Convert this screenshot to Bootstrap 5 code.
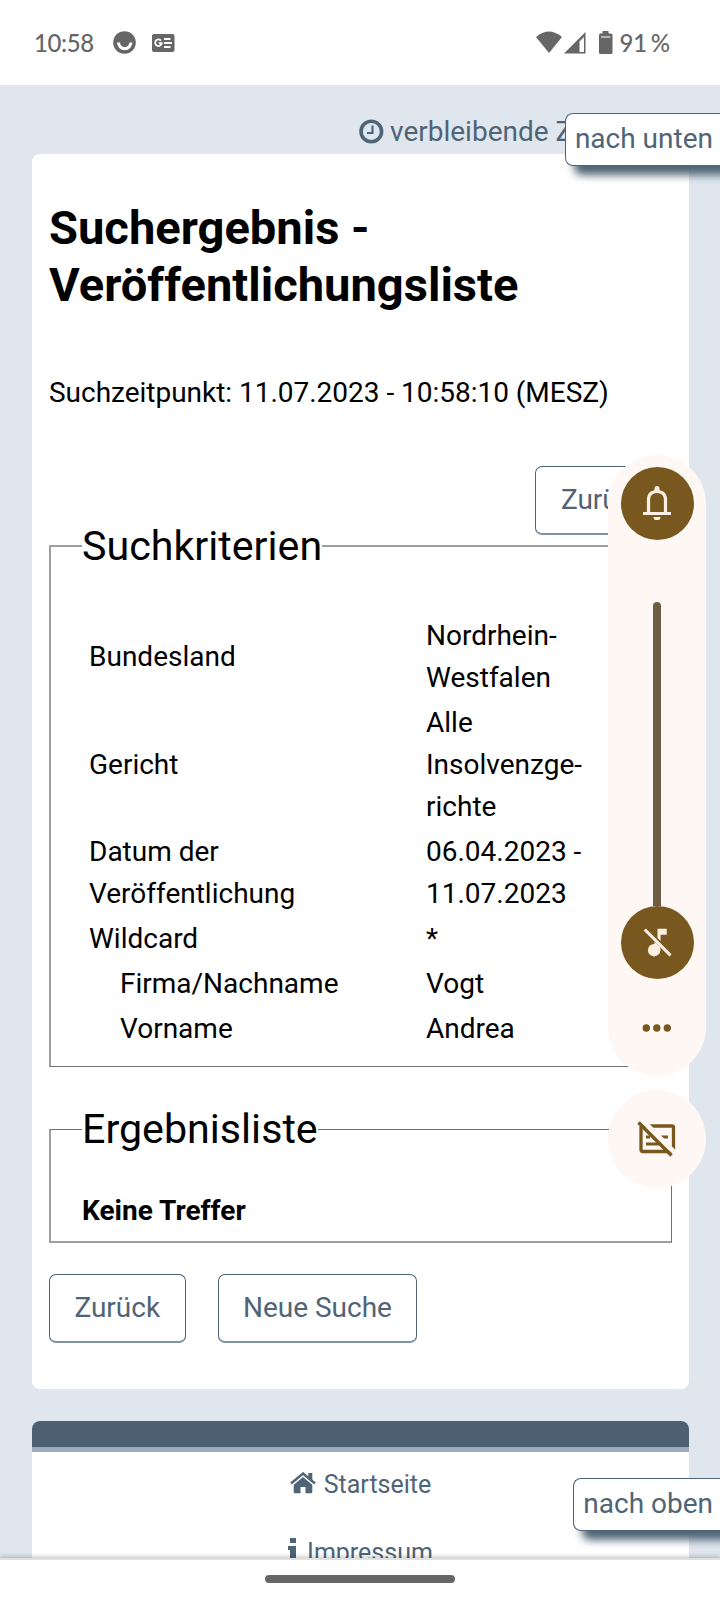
<!DOCTYPE html>
<html lang="de">
<head>
<meta charset="utf-8">
<meta name="viewport" content="width=device-width, initial-scale=1">
<title>Suchergebnis - Veröffentlichungsliste</title>
<link rel="stylesheet" href="https://cdn.jsdelivr.net/npm/bootstrap@5.3.0/dist/css/bootstrap.min.css">
<script src="https://cdn.jsdelivr.net/npm/bootstrap@5.3.0/dist/js/bootstrap.bundle.min.js"></script>
<style>
body { font: 28px/42px Roboto, sans-serif; color: #000; }
svg { display: block; flex: none; }
.screen { width: 720px; height: 1600px; background: #dfe6ee; }
.statusbar { height: 85px; padding: 0 50px 0 34px; color: #666; font: 500 24px/30px Lato, sans-serif; }
.icon-face { margin-left: 19px; }
.icon-news { margin: 0 auto 0 16px; }
.slate { color: #4f6476; }
.timer { height: 69px; padding: 26px 32px 0 359px; white-space: nowrap; }
.sheet { width: 657px; margin-left: 32px; border-radius: 8px; height: 1235px; padding: 46px 17px 0; }
.sheet h1 { font-size: 47.1px; line-height: 56.5px; font-weight: 700; margin-bottom: 59px; }
.stamp { margin-bottom: 52px; letter-spacing: -.02px; }
.btn-slate { --bs-btn-color: #4f6476; --bs-btn-border-color: #4f6476; --bs-btn-font-size: 28px; --bs-btn-line-height: 42px;
  --bs-btn-padding-x: 24.4px; --bs-btn-padding-y: 12px; --bs-btn-border-radius: 7px; --bs-btn-bg: #fff; border-bottom: 2px solid #8093a4; }
.group { border: 2px solid #9e9e9e; border-right: 1px solid #707070; padding: 0 31px; }
.group legend { font-size: 41.2px; line-height: 24px; margin-bottom: 0; }
.criteria { height: 533px; border-bottom: 1px solid #707070; margin-top: -1px; }
.criteria-rows { padding: 57px 7px 0; gap: 3px; }
.criteria-label { width: 337px; }
.sub { padding-left: 31px; }
.results { height: 126px; border-top: 1px solid #707070; margin-top: 50px; }
.foot { width: 657px; margin: 32px 0 0 32px; height: 150px; background: #fff; border-radius: 8px 8px 0 0; overflow: hidden;
  font-size: 25px; line-height: 36px; }
.foot-bar { height: 31px; background: #4d6072; border-bottom: 5px solid #9aacbd; }
.jump { right: 0; border: 1px solid #4f6476; border-right: 0; border-radius: 8px 0 0 8px; padding: 4px 7px 5px 9px; line-height: 42px;
  background: #fff; box-shadow: 9px 9px 9px #4d6474; white-space: nowrap; }
.volume { left: 608px; top: 454.5px; width: 98px; height: 621px; border-radius: 49px; background: #fdf8f4; padding-top: 12px; }
.knob { width: 73px; height: 73px; border-radius: 50%; background: #795820; }
.track { width: 8px; height: 304px; margin-top: 62px; border-radius: 4px 4px 0 0; background: #6e5d43; }
.caption-toggle { left: 608px; top: 1090px; width: 98px; height: 98px; border-radius: 50%; background: #fdf8f4; }
.gesture { left: 0; right: 0; bottom: 0; height: 42px; border-top: 2px solid #e0e0e0; background: #fff; padding-top: 15px; box-shadow: 0 -1px 5px rgba(0,0,0,.25); }
.gesture-pill { width: 190px; height: 8px; border-radius: 4px; background: #666; margin-left: 265px; }
</style>
</head>
<body>
<div class="screen position-relative overflow-hidden">
  <header class="statusbar bg-white d-flex align-items-center">
    <span style="letter-spacing:-.4px">10:58</span>
    <svg class="icon-face" width="23" height="23" viewBox="0 0 23 23"><circle cx="11.5" cy="11.5" r="11.3" fill="#666"/><path d="M5.500 11.500a6.200 6.200 0 0 0 12.400 0" fill="none" stroke="#fff" stroke-width="3"/></svg>
    <svg class="icon-news" width="23" height="18" viewBox="0 0 23 18"><rect width="22.5" height="18" rx="2" fill="#666"/><path d="M9 6.600A3.300 3.300 0 1 0 9.700 9.200H6.800M12 5h6.500M12 9h8M12 13h6.500" fill="none" stroke="#fff" stroke-width="1.8"/></svg>
    <svg width="78" height="24" viewBox="0 0 78 24"><path d="M0 6Q13-5 26 6L13 22Z" fill="#666"/><path d="M28 22.500 49.500 1V22.500Z" fill="#666"/><path d="M43.500 10.500 48 6V21H43.500Z" fill="#fff"/><path d="M66.500 0h6v2.500H75q1.500 0 1.500 1.500V21.500q0 1.500-1.500 1.500H64.500Q63 23 63 21.500V4q0-1.500 1.500-1.500h2Z" fill="#666"/><path d="M65 6h9.500" stroke="#fff" stroke-width="1"/></svg>
    <span style="margin-left:6px;word-spacing:-2px;letter-spacing:-.2px">91 %</span>
  </header>

  <div class="timer slate d-flex align-items-start">
    <svg style="margin:7.500px 6px 0 0" width="25" height="25" viewBox="0 0 25 25" fill="none" stroke="currentColor"><circle cx="12.300" cy="12.500" r="10.300" stroke-width="3.600"/><path d="M13.500 6.500v7.500H8" stroke-width="2.200"/></svg>
    <span>verbleibende Z</span>
  </div>

  <main class="sheet bg-white">
    <h1>Suchergebnis -<br>Veröffentlichungsliste</h1>
    <p class="stamp">Suchzeitpunkt: 11.07.2023 - 10:58:10 (MESZ)</p>
    <div class="d-flex justify-content-end"><button class="btn btn-slate">Zurück</button></div>
    <fieldset class="group criteria">
      <legend class="float-none w-auto px-0">Suchkriterien</legend>
      <div class="criteria-rows d-flex flex-column">
        <div class="d-flex align-items-center"><div class="criteria-label">Bundesland</div><div>Nordrhein-<br>Westfalen</div></div>
        <div class="d-flex align-items-center"><div class="criteria-label">Gericht</div><div>Alle<br>Insolvenzge-<br>richte</div></div>
        <div class="d-flex align-items-center"><div class="criteria-label">Datum der<br>Veröffentlichung</div><div>06.04.2023 -<br>11.07.2023</div></div>
        <div class="d-flex align-items-center"><div class="criteria-label">Wildcard</div><div>*</div></div>
        <div class="d-flex align-items-center"><div class="criteria-label sub">Firma/Nachname</div><div>Vogt</div></div>
        <div class="d-flex align-items-center"><div class="criteria-label sub">Vorname</div><div>Andrea</div></div>
      </div>
    </fieldset>
    <fieldset class="group results">
      <legend class="float-none w-auto px-0">Ergebnisliste</legend>
      <div class="fw-bold" style="padding-top:49px">Keine Treffer</div>
    </fieldset>
    <div class="d-flex" style="gap:32px;margin-top:31px">
      <button class="btn btn-slate">Zurück</button>
      <button class="btn btn-slate">Neue Suche</button>
    </div>
  </main>

  <footer class="foot slate">
    <div class="foot-bar"></div>
    <div class="d-flex justify-content-center" style="padding-top:15px">
      <svg style="margin:5px 8px 0 0" width="26" height="22" viewBox="0 0 26 22"><path d="M13 4.500 22.300 12.500V20q0 1.300-1.300 1.300H15.500V15h-5v6.300H5Q3.700 21.300 3.700 20V12.500Z" fill="currentColor"/><path d="M1 12 13 2 25 12" fill="none" stroke="#fff" stroke-width="4.600"/><path d="M1 11.500 13 1.500 25 11.500" fill="none" stroke="currentColor" stroke-width="2.400"/><path d="M18.300 1H22.300V9L18.300 6Z" fill="currentColor"/></svg>
      <span>Startseite</span>
    </div>
    <div class="d-flex justify-content-center" style="padding-top:32px">
      <svg style="margin:3px 9px 0 0" width="10" height="25" viewBox="0 0 10 25"><path d="M2 0h6v5H2ZM0 8h8v12h2v4H0v-4h2v-8H0Z" fill="currentColor"/></svg>
      <span>Impressum</span>
    </div>
  </footer>

  <a class="jump slate position-absolute text-decoration-none" style="top:113px">nach unten</a>
  <a class="jump slate position-absolute text-decoration-none" style="top:1478px">nach oben</a>

  <aside class="volume position-absolute d-flex flex-column align-items-center">
    <div class="knob d-flex justify-content-center align-items-center">
      <svg width="28" height="34" viewBox="0 0 28 34"><path d="M0 27.500h28M5.500 27V14q0-8.500 8.500-8.500T22.500 14V27" fill="none" stroke="#fbefe4" stroke-width="3.200"/><path d="M11.500 5V2.500a2.500 2.500 0 0 1 5 0V5ZM10.500 31h7a3.500 3.500 0 0 1-7 0Z" fill="#fbefe4"/></svg>
    </div>
    <div class="track"></div>
    <div class="knob d-flex justify-content-center align-items-center">
      <svg width="37" height="37" viewBox="0 0 24 24" fill="#fbefe4"><path d="M14 11V7h4V3h-6v6z"/><circle cx="9.800" cy="17" r="4"/><path d="M10 11.500 13.900 15V17H10Z"/><path d="M4.410 2.860 3 4.270 19.730 21l1.410-1.410z"/></svg>
    </div>
    <svg style="margin-top:45px" width="30" height="8" viewBox="0 0 30 8" fill="#795820"><circle cx="4.300" cy="4" r="3.700"/><circle cx="14.800" cy="4" r="3.700"/><circle cx="25.300" cy="4" r="3.700"/></svg>
  </aside>
  <div class="caption-toggle position-absolute d-flex justify-content-center align-items-center">
    <svg width="40" height="38" viewBox="0 0 40 38" fill="none" stroke="#795820"><rect x="4" y="6" width="32.500" height="25.500" rx="1.500" stroke-width="3.300"/><path d="M9 17h4M20 17h11M9 24h13M28 24h3" stroke-width="3"/><path d="M3 -2 40 35" stroke="#fdf8f4" stroke-width="5"/><path d="M1.500 2.500 34.500 35.500" stroke-width="3.500"/></svg>
  </div>

  <div class="gesture position-absolute"><div class="gesture-pill"></div></div>
</div>
</body>
</html>
